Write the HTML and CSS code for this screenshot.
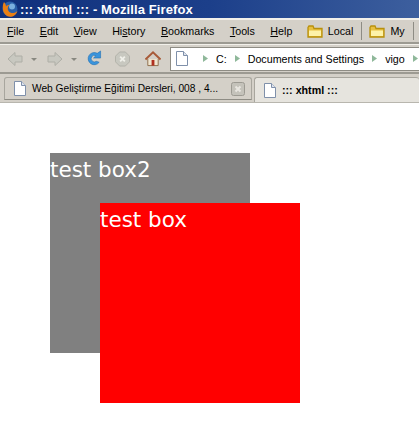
FILE: index.html
```html
<!DOCTYPE html>
<html lang="en">
<head>
<meta charset="UTF-8">
<title>:: xhtml ::</title>
<link rel="stylesheet" href="styles.css">
</head>
<body>
<svg class="defs" width="0" height="0">
  <defs>
    <symbol id="doc" viewBox="0 0 12 15">
      <path d="M.5 .5H7.500L11.500 4.500V14.500H.5Z" fill="#fff" stroke="#7f90aa"/>
      <path d="M7.500 .5V4.500H11.500" fill="#dfe4ee" stroke="#7f90aa"/>
    </symbol>
    <symbol id="folder" viewBox="0 0 16 13">
      <path d="M1 2.500V12H15V3.500H7L6 1H2Z" fill="#e8c040" stroke="#b8900c" stroke-width="1.300"/>
      <path d="M2 5.500H14V11H2Z" fill="#fdf2a8"/>
    </symbol>
    <symbol id="crumb" viewBox="0 0 5 7">
      <path d="M0 0L5 3.500L0 7Z" fill="#8fb89a"/>
    </symbol>
  </defs>
</svg>

<header class="titlebar">
  <svg class="fox" width="16" height="16" viewBox="0 0 16 16">
    <circle cx="8" cy="8" r="7.500" fill="#2a5fa8"/>
    <circle cx="10" cy="5.500" r="3" fill="#7ab0e0"/>
    <path d="M2 1C0 5 0 12 5 15C9 17 14 15 15.500 10C13 12.500 8.500 13 6.500 10C5 7.500 6 5.500 7.500 4C5.500 4 4.500 4.500 4 5.500C4 4 3 2 2 1Z" fill="#ea7f14"/>
  </svg>
  <span class="title">::: xhtml ::: - Mozilla Firefox</span>
</header>

<nav class="menubar">
  <span class="menu-item"><u>F</u>ile</span>
  <span class="menu-item"><u>E</u>dit</span>
  <span class="menu-item"><u>V</u>iew</span>
  <span class="menu-item">Hi<u>s</u>tory</span>
  <span class="menu-item"><u>B</u>ookmarks</span>
  <span class="menu-item"><u>T</u>ools</span>
  <span class="menu-item"><u>H</u>elp</span>
  <div class="bookmarks">
    <span class="bookmark"><svg width="16" height="13"><use href="#folder"/></svg>Local</span>
    <span class="bookmark"><svg width="16" height="13"><use href="#folder"/></svg>My</span>
    <span class="bookmark"><svg width="16" height="13"><use href="#folder"/></svg></span>
  </div>
</nav>

<div class="toolbar">
  <svg width="16" height="16" viewBox="0 0 16 16"><path d="M1 8L8 1.500V5H15V11H8V14.500Z" fill="#c8c8c0" stroke="#aeaea6"/></svg>
  <span class="drop"></span>
  <svg width="16" height="16" viewBox="0 0 16 16"><path d="M15 8L8 1.500V5H1V11H8V14.500Z" fill="#c8c8c0" stroke="#aeaea6"/></svg>
  <span class="drop"></span>
  <svg class="reload" width="16" height="17" viewBox="0 0 17 18">
    <path d="M14 13A6.500 6.500 0 1 1 12 3.500L15.500 1V8.500H8L10.500 6A3.500 3.500 0 1 0 11 12Z" fill="#3a94dc" stroke="#1e6cb0" stroke-width=".6"/>
  </svg>
  <svg class="stop" width="15" height="16" viewBox="0 0 16 16">
    <path d="M5 .5H11L15.500 5V11L11 15.500H5L.5 11V5Z" fill="#c8c8c0" stroke="#b0b0a8"/>
    <path d="M5.500 5.500L10.500 10.500M10.500 5.500L5.500 10.500" stroke="#f0f0ea" stroke-width="2"/>
  </svg>
  <svg class="home" width="16" height="16" viewBox="0 0 17 16">
    <path d="M3 8V15H14V8" fill="#f0e6d0" stroke="#8c6a48"/>
    <path d="M.5 8.500L8.500 1L16.500 8.500" fill="none" stroke="#a85a38" stroke-width="2"/>
    <rect x="7" y="9" width="3" height="6" fill="#b03020"/>
  </svg>
  <div class="address">
    <svg width="12" height="15"><use href="#doc"/></svg>
    <svg class="crumb first" width="5" height="7"><use href="#crumb"/></svg>
    <span>C:</span>
    <svg class="crumb" width="5" height="7"><use href="#crumb"/></svg>
    <span>Documents and Settings</span>
    <svg class="crumb" width="5" height="7"><use href="#crumb"/></svg>
    <span>vigo</span>
    <svg class="crumb" width="5" height="7"><use href="#crumb"/></svg>
  </div>
</div>

<div class="tabbar">
  <div class="tab">
    <svg width="12" height="15"><use href="#doc"/></svg>
    <span class="tab-label">Web Geliştirme Eğitimi Dersleri, 008 , 4...</span>
    <svg class="tab-close" width="14" height="14" viewBox="0 0 14 14">
      <rect x=".5" y=".5" width="13" height="13" rx="2" fill="#c4c2ba" stroke="#9c9a92"/>
      <path d="M4.500 4.500L9.500 9.500M9.500 4.500L4.500 9.500" stroke="#e8e6e0" stroke-width="2"/>
    </svg>
  </div>
  <div class="tab active">
    <svg width="12" height="15"><use href="#doc"/></svg>
    <span class="tab-label">::: xhtml :::</span>
  </div>
</div>

<main class="content">
  <div class="box box-gray">test box2</div>
  <div class="box box-red">test box</div>
</main>
</body>
</html>
```

FILE: styles.css
```css
html, body {
  margin: 0;
  padding: 0;
  height: 100%;
  overflow: hidden;
  background-color: white;
  font-family: "Liberation Sans", sans-serif;
  font-size: 10.700px;
  color: black;
}

svg {
  flex-shrink: 0;
}

.defs {
  position: absolute;
}

.titlebar {
  height: 18px;
  display: flex;
  align-items: center;
  gap: 2px;
  padding-left: 2px;
  background: linear-gradient(90deg, #10307c 0%, #1c3f8a 50%, #3d5f9e 100%);
  color: white;
}

.title {
  font-weight: bold;
  font-size: 13px;
  letter-spacing: .1px;
}

.menubar {
  height: 26px;
  display: flex;
  align-items: center;
  box-sizing: border-box;
  padding-left: 7px;
  gap: 15.500px;
  background-color: #d4d0c8;
  border-top: 2px solid #f2f0ea;
  border-bottom: 2px solid #9c9a92;
  overflow: hidden;
}

.menu-item {
  white-space: nowrap;
}

.bookmarks {
  display: flex;
  align-items: center;
  gap: 7px;
  margin-left: -1px;
}

.bookmark {
  display: flex;
  align-items: center;
  gap: 5px;
  height: 18px;
  padding-right: 8px;
  border-right: 1px solid #8e8c84;
  white-space: nowrap;
}

.bookmark:last-child {
  border-right: none;
}

.toolbar {
  height: 30px;
  display: flex;
  align-items: center;
  box-sizing: border-box;
  padding-left: 7px;
  background-color: #d4d0c8;
  border-top: 1px solid #f2f0ea;
  border-bottom: 2px solid #9c9a92;
}

.drop {
  width: 0;
  height: 0;
  margin: 2px 10px 0 8px;
  border-left: 3px solid transparent;
  border-right: 3px solid transparent;
  border-top: 3px solid #888880;
}

.reload {
  margin-left: -1px;
}

.stop {
  margin-left: 13px;
}

.home {
  margin-left: 15px;
}

.address {
  flex: 1;
  min-width: 0;
  height: 22px;
  display: flex;
  align-items: center;
  gap: 8px;
  margin-left: 9px;
  padding-left: 5px;
  background-color: white;
  border: 1px solid #8e8c84;
  border-right: none;
  white-space: nowrap;
  overflow: hidden;
}

.crumb.first {
  margin-left: 7px;
}

.tabbar {
  height: 29px;
  display: flex;
  box-sizing: border-box;
  padding: 3px 0 0 4px;
  gap: 2px;
  background-color: #d4d0c8;
  border-bottom: 1px solid #b8b6ae;
}

.tab {
  width: 248px;
  height: 23px;
  box-sizing: border-box;
  display: flex;
  align-items: center;
  gap: 6px;
  padding-left: 9px;
  background-color: #d4d0c8;
  border: 1px solid #a8a69e;
  border-bottom-color: #8e8c84;
  border-radius: 3px 3px 0 0;
  white-space: nowrap;
}

.tab-label {
  flex: 1;
  min-width: 0;
  font-size: 10.200px;
}

.tab-close {
  margin-right: 6px;
}

.tab.active {
  flex: 1;
  width: auto;
  height: 25px;
  background-color: #e6e4de;
  border-right: none;
  border-bottom: none;
}

.tab.active .tab-label {
  font-size: 10.700px;
  font-weight: bold;
}

.content {
  position: relative;
  height: 325px;
}

.box {
  position: absolute;
  width: 200px;
  height: 200px;
  color: white;
  font-family: "DejaVu Sans", sans-serif;
  font-size: 21.500px;
  line-height: 34px;
}

.box-gray {
  left: 50px;
  top: 50px;
  background-color: gray;
}

.box-red {
  left: 100px;
  top: 100px;
  background-color: red;
}
```
